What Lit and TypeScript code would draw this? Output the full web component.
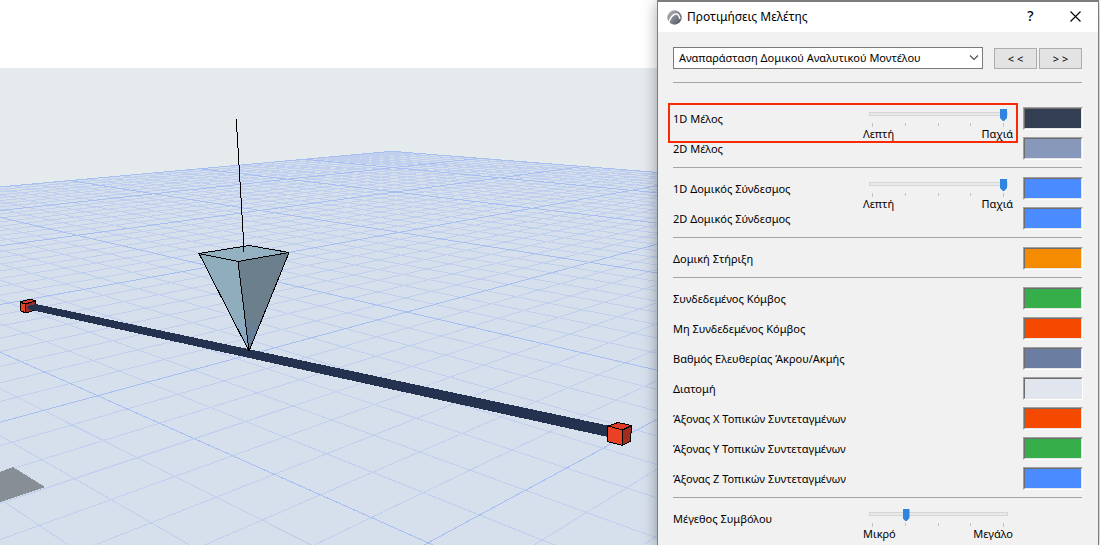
import { LitElement, html, svg, css, nothing } from "lit";
import { customElement, property } from "lit/decorators.js";

type Point = [number, number];

/** Perspective mapping of the ground plane; u and v count major grid cells. */
const weight = (u: number, v: number) => 1 + 0.343 * u + 0.311 * v;
const project = (u: number, v: number): Point => {
  const w = weight(u, v);
  return [
    (97.7 + 448.5 * u - 197.3 * v) / w,
    (395.7 + 23.3 * u + 21.7 * v) / w,
  ];
};

const U_MAX = 5;
const V_MAX = 4;
const STEPS = 8;
const NEAR = 0.12;

function gridPath(major: boolean): string {
  const parts: string[] = [];
  const add = (a: Point, b: Point) =>
    parts.push(
      `M${a[0].toFixed(1)} ${a[1].toFixed(1)}L${b[0].toFixed(1)} ${b[1].toFixed(1)}`
    );
  for (let i = -3 * STEPS; i <= U_MAX * STEPS; i++) {
    if ((i % STEPS === 0) !== major) continue;
    const u = i / STEPS;
    const start = Math.max(-6, (NEAR - 1 - 0.343 * u) / 0.311);
    if (start < V_MAX) add(project(u, start), project(u, V_MAX));
  }
  for (let i = -6 * STEPS; i <= V_MAX * STEPS; i++) {
    if ((i % STEPS === 0) !== major) continue;
    const v = i / STEPS;
    const start = Math.max(-6, (NEAR - 1 - 0.311 * v) / 0.343);
    if (start < U_MAX) add(project(start, v), project(U_MAX, v));
  }
  return parts.join("");
}

@customElement("model-view")
export class ModelView extends LitElement {
  static styles = css`
    :host {
      display: block;
      overflow: hidden;
      background: #d6dfec;
    }
    .scene {
      display: block;
      width: 100%;
      height: 100%;
    }
    .sky { fill: #e5eaec; }
    .ground { fill: #d6dfec; }
    .minor { stroke: #c0cfed; fill: none; }
    .major { stroke: #a6bef0; fill: none; }
    .shade { fill: #888e96; }
    .member { fill: #25324f; }
    .edge { stroke: #000; stroke-linejoin: round; }
    .line { stroke: #000; fill: none; }
    .lit { fill: #ea4024; }
    .top { fill: #dc3c26; }
    .dark { fill: #a02d20; }
    .cone-top { fill: #93b1c0; }
    .cone-left { fill: url(#left-face); }
    .cone-right { fill: url(#right-face); }
  `;

  render() {
    return html`
      <svg class="scene" viewBox="0 68 657 477" preserveAspectRatio="xMinYMin slice"
        shape-rendering="crispEdges" role="img" aria-label="3D">
        ${svg`
        <defs>
          <linearGradient id="left-face" x1="0" y1="0" x2="0" y2="1">
            <stop offset="0.65" stop-color="#90adbd" /><stop offset="0.85" stop-color="#88a9c6" />
          </linearGradient>
          <linearGradient id="right-face" x1="0" y1="0" x2="0" y2="1">
            <stop offset="0.68" stop-color="#6b808c" /><stop offset="0.76" stop-color="#667e97" />
          </linearGradient>
        </defs>
        <rect class="sky" x="0" y="68" width="1400" height="150" />
        <path class="ground" d="M-308 215L391 151L1300 222V1200H-308Z" />
        <path class="minor" d=${gridPath(false)} />
        <path class="major" d=${gridPath(true)} />
        <path class="shade" d="M0 472L13 467L45 487L0 502Z" />

        <path class="edge lit" d="M20 302L25 304L26 313L21 311Z" />
        <path class="edge top" d="M20 302L30 299L35.500 301L25 304Z" />
        <path class="edge dark" d="M25 304L35.500 301V310L26 313Z" />
        <path class="member" d="M28 306L36 304L608 425.500V437L36 311L28 309Z" />

        <path class="edge cone-left" d="M199 253.500L238 261.500L249 351Z" />
        <path class="edge cone-right" d="M238 261.500L289 252.500L249 351Z" />
        <path class="edge cone-top" d="M199 253.500L249 245.500L289 252.500L238 261.500Z" />
        <path class="line" d="M236.500 119V123L243.500 240V252" />

        <path class="edge lit" d="M608 426L622.500 430L622.500 445.500L607.500 441.500Z" />
        <path class="edge top" d="M608 426L618 422.500L631.500 425.500L622.500 430Z" />
        <path class="edge dark" d="M622.500 430L631.500 425.500L630.500 441L622.500 445.500Z" />
        `}
      </svg>
    `;
  }
}

@customElement("level-slider")
export class LevelSlider extends LitElement {
  @property() label = "";
  @property() low = "";
  @property() high = "";
  @property({ type: Number }) level = 0;

  static styles = css`
    :host {
      display: block;
      width: 150px;
    }
    .range {
      -webkit-appearance: none;
      appearance: none;
      display: block;
      width: 139px;
      height: 12px;
      margin: 0 5px 0 6px;
      padding: 0;
      background: none;
      outline: none;
    }
    .range::-webkit-slider-runnable-track {
      height: 4px;
      box-sizing: border-box;
      border: 1px solid #d6d6d6;
      background: #e7eaea;
    }
    .range::-webkit-slider-thumb {
      -webkit-appearance: none;
      width: 7px;
      height: 12px;
      margin-top: -4px;
      background: #2f84de;
      clip-path: polygon(0 0, 100% 0, 100% 75%, 60% 100%, 40% 100%, 0 75%);
    }
    .ticks {
      display: flex;
      justify-content: space-between;
      height: 4px;
      margin: 3px 9px 0;
    }
    .tick {
      width: 1px;
      height: 3px;
      background: #c4c4c4;
    }
    .tick:first-child,
    .tick:last-child {
      height: 4px;
    }
    .ends {
      display: flex;
      justify-content: space-between;
      line-height: 14px;
    }
  `;

  render() {
    return html`
      <input class="range" type="range" min="0" max="4" .value=${String(this.level)} aria-label=${this.label} />
      <div class="ticks">${[0, 1, 2, 3, 4].map(() => html`<span class="tick"></span>`)}</div>
      <div class="ends"><span>${this.low}</span><span>${this.high}</span></div>
    `;
  }
}

interface Setting {
  label: string;
  color?: string;
  slider?: { low: string; high: string; level: number };
  marked?: boolean;
}

const thickness = { low: "Λεπτή", high: "Παχιά", level: 4 };

const groups: Setting[][] = [
  [
    { label: "1D Μέλος", color: "#353f54", slider: thickness, marked: true },
    { label: "2D Μέλος", color: "#8898ba" },
  ],
  [
    { label: "1D Δομικός Σύνδεσμος", color: "#4a8cff", slider: thickness },
    { label: "2D Δομικός Σύνδεσμος", color: "#4a8cff" },
  ],
  [{ label: "Δομική Στήριξη", color: "#f58b00" }],
  [
    { label: "Συνδεδεμένος Κόμβος", color: "#36ae4a" },
    { label: "Μη Συνδεδεμένος Κόμβος", color: "#f54900" },
    { label: "Βαθμός Ελευθερίας Άκρου/Ακμής", color: "#6b7ea2" },
    { label: "Διατομή", color: "#e1e5ee" },
    { label: "Άξονας X Τοπικών Συντεταγμένων", color: "#f54900" },
    { label: "Άξονας Y Τοπικών Συντεταγμένων", color: "#36ae4a" },
    { label: "Άξονας Z Τοπικών Συντεταγμένων", color: "#4a8cff" },
  ],
  [{ label: "Μέγεθος Συμβόλου", slider: { low: "Μικρό", high: "Μεγάλο", level: 1 } }],
];

@customElement("preferences-dialog")
export class PreferencesDialog extends LitElement {
  static styles = css`
    :host {
      display: block;
      box-sizing: border-box;
      border: 1px solid #7d7d7d;
      border-width: 2px 1px 0;
      background: #f1f1f1;
      color: #000;
      font: 11px/16px "Noto Sans", sans-serif;
    }
    .titlebar {
      display: flex;
      align-items: center;
      height: 30px;
      padding-left: 9px;
      background: #fff;
    }
    .logo {
      width: 15px;
      height: 15px;
      margin-right: 5px;
    }
    .title {
      flex: 1;
      margin: 0;
      font-size: 12px;
      font-weight: 400;
    }
    .window-button {
      display: grid;
      place-items: center;
      width: 45px;
      height: 28px;
      margin-bottom: 2px;
      padding: 0;
      border: 0;
      background: none;
      color: #000;
      font: 500 14px/20px "Noto Sans", sans-serif;
    }
    .content {
      padding: 15px;
    }
    .chooser {
      display: flex;
      align-items: end;
      margin-right: 1px;
    }
    .combo {
      flex: 1;
      display: grid;
      margin-right: 11px;
    }
    .combo > * {
      grid-area: 1 / 1;
    }
    .select {
      -webkit-appearance: none;
      appearance: none;
      width: 100%;
      height: 22px;
      padding: 0 24px 0 5px;
      border: 1px solid #7a7a7a;
      border-radius: 0;
      background: #fff;
      color: #000;
      font: inherit;
    }
    .chevron {
      place-self: center end;
      width: 10px;
      height: 6px;
      margin-right: 4px;
      pointer-events: none;
    }
    .step {
      width: 43px;
      height: 21px;
      padding: 0;
      border: 1px solid #adadad;
      background: #e3e3e3;
      color: #000;
      font: inherit;
    }
    .step + .step {
      margin-left: 2px;
    }
    .divider {
      height: 1px;
      margin: 3px 1px 6px 0;
      border: 0;
      background: #a5a5a5;
    }
    .divider.first {
      margin: 13px 1px 21px 0;
    }
    .row {
      position: relative;
      display: grid;
      grid-template: 30px / 1fr 150px 60px;
      column-gap: 10px;
      align-items: center;
    }
    .name {
      grid-column: 1;
    }
    .slider {
      grid-column: 2;
      align-self: start;
      padding-top: 4px;
    }
    .swatch {
      -webkit-appearance: none;
      appearance: none;
      grid-column: 3;
      align-self: start;
      box-sizing: border-box;
      width: 60px;
      height: 23px;
      margin: 3px 0 0;
      padding: 0;
      border: 1px solid;
      border-color: #a0a0a0 #fff #fff #a0a0a0;
      background: none;
    }
    .swatch::-webkit-color-swatch-wrapper {
      padding: 0;
    }
    .swatch::-webkit-color-swatch {
      border: 1px solid;
      border-color: #6e6e6e #e6e6e6 #e6e6e6 #6e6e6e;
      border-radius: 0;
    }
    .mark {
      position: absolute;
      inset: -1px 65px -9px -5px;
      border: 2px solid #fa2a05;
      pointer-events: none;
    }
  `;

  private row(setting: Setting, id: string) {
    const { label, color, slider, marked } = setting;
    return html`
      <div class="row">
        <label class="name" for=${id}>${label}</label>
        ${slider
          ? html`<level-slider class="slider" id=${color ? nothing : id} .label=${label}
              .low=${slider.low} .high=${slider.high} .level=${slider.level}></level-slider>`
          : nothing}
        ${color ? html`<input class="swatch" id=${id} type="color" .value=${color} />` : nothing}
        ${marked ? html`<span class="mark"></span>` : nothing}
      </div>
    `;
  }

  render() {
    return html`
      <header class="titlebar">
        <svg class="logo" viewBox="0 0 15 15" aria-hidden="true">
          <defs>
            <linearGradient id="shell" x1="0" y1="0" x2="1" y2="1">
              <stop offset="0" stop-color="#b9babe" /><stop offset="1" stop-color="#4c4f5c" />
            </linearGradient>
          </defs>
          <circle cx="7.500" cy="7.500" r="7.200" fill="url(#shell)" />
          <path d="M1.500 14C2.500 8.500 5.500 4 9 4C11.500 4 12.500 6.500 12.800 9" fill="none" stroke="#fff" stroke-width="1.500" />
          <path d="M0 10L2 15H0Z" fill="#fff" />
        </svg>
        <h1 class="title">Προτιμήσεις Μελέτης</h1>
        <button class="window-button" type="button">?</button>
        <button class="window-button" type="button" aria-label="Κλείσιμο">
          <svg width="11" height="11" viewBox="0 0 11 11" aria-hidden="true">
            <path d="M0.500 0.500L10.500 10.500M10.500 0.500L0.500 10.500" stroke="#000" stroke-width="1.100" />
          </svg>
        </button>
      </header>
      <div class="content">
        <div class="chooser">
          <div class="combo">
            <select class="select" aria-label="Προτιμήσεις Μελέτης">
              <option>Αναπαράσταση Δομικού Αναλυτικού Μοντέλου</option>
            </select>
            <svg class="chevron" viewBox="0 0 10 6" aria-hidden="true">
              <path d="M1 0.500L5 4.500L9 0.500" fill="none" stroke="#505050" stroke-width="1.200" />
            </svg>
          </div>
          <button class="step" type="button">&lt; &lt;</button>
          <button class="step" type="button">&gt; &gt;</button>
        </div>
        <hr class="divider first" />
        ${groups.map(
          (group, g) => html`
            ${g ? html`<hr class="divider" />` : nothing}
            ${group.map((setting, i) => this.row(setting, `setting-${g}-${i}`))}
          `
        )}
      </div>
    `;
  }
}

@customElement("app-root")
export class AppRoot extends LitElement {
  static styles = css`
    :host {
      display: flex;
      height: 100vh;
      overflow: hidden;
      background: #fff;
    }
    .view {
      flex: 1;
      min-width: 0;
      margin-top: 68px;
    }
    .dialog {
      position: relative;
      flex: none;
      width: 442px;
      min-height: 100%;
      margin-right: 1px;
      box-shadow: 0 2px 14px rgba(0, 0, 0, 0.35);
    }
  `;

  render() {
    return html`
      <model-view class="view"></model-view>
      <preferences-dialog class="dialog"></preferences-dialog>
    `;
  }
}
